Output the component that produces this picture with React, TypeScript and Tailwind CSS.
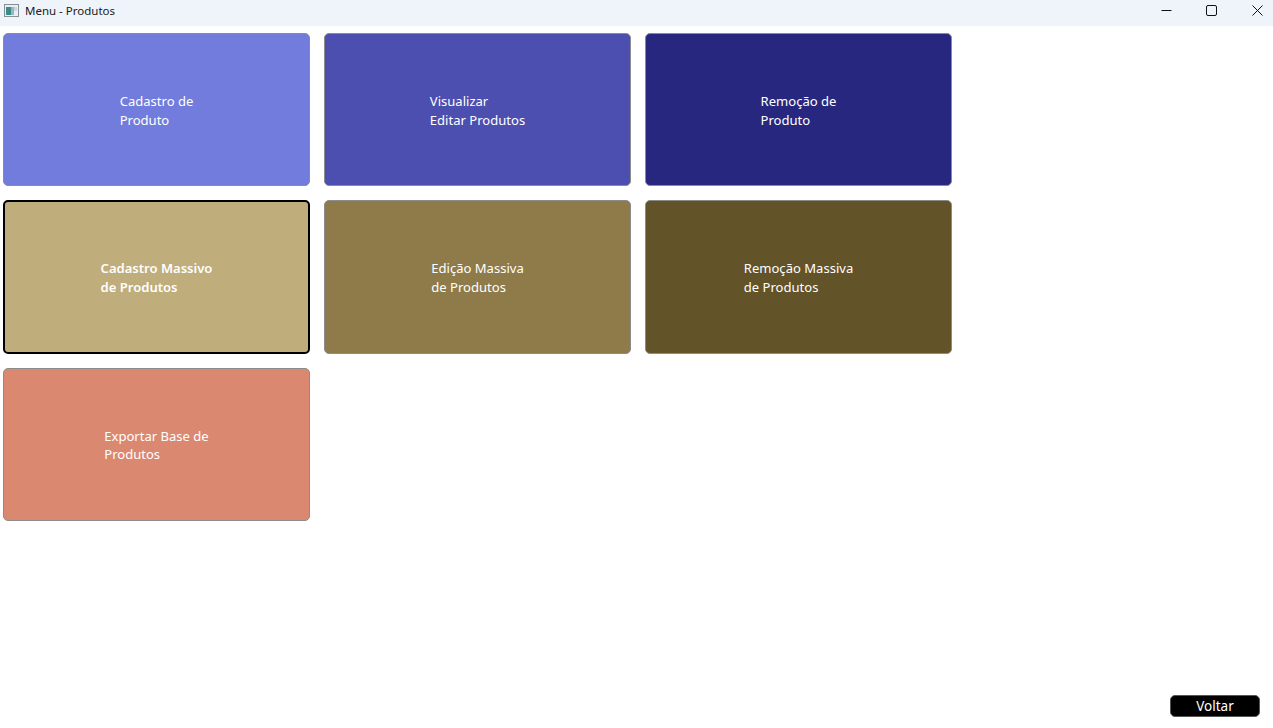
const cards = [
  { lines: ['Cadastro de', 'Produto'], color: 'bg-[#717cdc]' },
  { lines: ['Visualizar', 'Editar Produtos'], color: 'bg-[#4c4eb0]' },
  { lines: ['Remoção de', 'Produto'], color: 'bg-[#27277f]' },
  { lines: ['Cadastro Massivo', 'de Produtos'], color: 'bg-[#bfad7c]', focused: true },
  { lines: ['Edição Massiva', 'de Produtos'], color: 'bg-[#8f7b49]' },
  { lines: ['Remoção Massiva', 'de Produtos'], color: 'bg-[#635329]' },
  { lines: ['Exportar Base de', 'Produtos'], color: 'bg-[#db8871]' },
]

function TitleBar() {
  return (
    <div className="flex h-[26px] shrink-0 items-start justify-between bg-[#eff3fa] pt-[3px]">
      <div className="flex items-center">
        <svg className="ml-1 h-[15px] w-[15px]" viewBox="0 0 15 15">
          <rect x="0.5" y="1.5" width="14" height="12" fill="#e8eef2" stroke="#8a8f96" />
          <rect x="2" y="4" width="5" height="8" fill="#3d8b85" />
          <rect x="7" y="4" width="3" height="8" fill="#8fb8c9" />
          <rect x="10" y="4" width="3" height="4" fill="#c9d8e4" />
        </svg>
        <span className="ml-[6px] text-[11.5px] leading-[15px] text-[#1a1a1a]">Menu - Produtos</span>
      </div>
      <div className="flex items-center pt-[2px]">
        <svg className="mr-[34px] h-[11px] w-[11px]" viewBox="0 0 11 11">
          <path d="M0.5 5.5H10.5" stroke="#111" fill="none" />
        </svg>
        <svg className="mr-[35px] h-[11px] w-[11px]" viewBox="0 0 11 11">
          <rect x="0.5" y="0.5" width="10" height="10" rx="1.5" stroke="#111" fill="none" />
        </svg>
        <svg className="mr-[10px] h-[11px] w-[11px]" viewBox="0 0 11 11">
          <path d="M0.5 0.5L10.5 10.5M10.5 0.5L0.5 10.5" stroke="#111" fill="none" />
        </svg>
      </div>
    </div>
  )
}

export default function App() {
  return (
    <div className="flex h-screen flex-col overflow-hidden bg-white font-['Noto_Sans','Open_Sans',sans-serif]">
      <TitleBar />
      <div className="grid grow grid-cols-[307px_307px_307px] content-start gap-x-[14px] gap-y-[14px] pl-[3px] pt-[7px]">
        {cards.map((card) => (
          <button
            className={`flex h-[153.25px] items-center justify-center rounded-[5px] pt-[2px] text-left text-[13.05px] leading-[18.5px] text-white ${card.color} ${
              card.focused ? 'border-2 border-black font-semibold' : 'border border-[#8c8c8c]'
            }`}
            key={card.lines[0]}
            type="button"
          >
            <span>
              {card.lines[0]}
              <br />
              {card.lines[1]}
            </span>
          </button>
        ))}
      </div>
      <div className="flex shrink-0 justify-end pb-[11px] pr-[13px]">
        <button
          className="h-[22px] w-[90px] rounded-[5px] border border-[#555] bg-black pt-[2px] text-[13.5px] leading-none text-white"
          type="button"
        >
          Voltar
        </button>
      </div>
    </div>
  )
}
